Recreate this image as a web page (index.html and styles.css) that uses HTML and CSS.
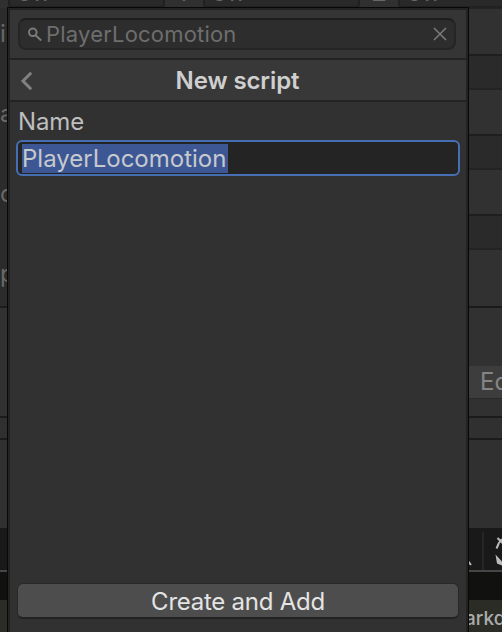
FILE: index.html
```html
<!DOCTYPE html>
<html lang="en">
<head>
<meta charset="utf-8">
<title>New script</title>
<link rel="stylesheet" href="styles.css">
</head>
<body>
<div class="editor">
  <div class="fields">
    <div class="field"><span>Off</span></div><div class="axis"><span>Y</span></div>
    <div class="field"><span>Off</span></div><div class="axis"><span>Z</span></div>
    <div class="field"><span>Off</span></div>
  </div>
  <div class="inspector">
    <div class="labels">
      <span>i</span><span>a</span><span>c</span><span>p</span>
    </div>
    <div class="rows">
      <div class="row first"></div>
      <div class="head"></div><div class="row"></div>
      <div class="head"></div><div class="row"></div>
      <div class="head"></div><div class="row last"></div>
    </div>
  </div>
  <div class="material"><span class="edit">Edit</span></div>
  <div class="strip"></div>
  <div class="empty"></div>
  <div class="toolbar">
    <svg width="34" height="42" viewBox="468 528 34 42">
      <path d="M468 561l3 4" stroke="#b4b4b4" stroke-width="2"/>
      <path d="M483 532v38" stroke="#262626" stroke-width="2"/>
      <path d="M496.500 548.500l2.200-5M497.500 538l5 5M502 539l-3.500 4.500" stroke="#bcbcbc" stroke-width="2" fill="none"/>
      <path d="M495.500 554.500l6.500 7v4l-5-2z" fill="#bcbcbc"/>
    </svg>
  </div>
  <div class="gap"></div>
  <div class="assets"><span>arkdown</span></div>
</div>

<div class="popup">
  <div class="search-bar">
    <div class="search">
      <svg class="lens" width="16" height="16" viewBox="0 0 16 16"><circle cx="5.8" cy="5.3" r="3.8"/><path d="M8.6 8.2l5.6 5.3"/></svg>
      <span class="query">PlayerLocomotion</span>
      <svg class="clear" width="14" height="14" viewBox="0 0 14 14"><path d="M1 1l12 12M13 1L1 13"/></svg>
    </div>
  </div>
  <div class="title">
    <svg class="back" width="14" height="20" viewBox="0 0 14 20"><path d="M11.2 1.8L3 10l8.2 8.2"/></svg>
    <h1>New script</h1>
  </div>
  <div class="body">
    <div class="label">Name</div>
    <div class="name"><span>PlayerLocomotion</span></div>
    <div class="create">Create and Add</div>
  </div>
</div>
</body>
</html>
```

FILE: styles.css
```css
* { box-sizing: border-box; }
body {
  margin: 0;
  width: 502px;
  height: 632px;
  overflow: hidden;
  position: relative;
  background: #303030;
  font-family: Inter, "Liberation Sans", sans-serif;
  font-size: 24px;
  font-weight: 400;
  color: #bebebe;
}
svg { display: block; fill: none; flex: none; }

.editor { display: flex; flex-direction: column; height: 632px; overflow: hidden; color: #686868; }
.fields { display: flex; height: 8px; overflow: hidden; background: #303030; padding-left: 8px; }
.field {
  width: 157px;
  flex: none;
  height: 8px;
  background: #292929;
  border: 2px solid #212121;
  border-top: 0;
  border-radius: 0 0 4px 4px;
  padding-left: 5px;
}
.field span, .axis span { display: block; height: 30px; line-height: 30px; margin-top: -22px; }
.axis { width: 38px; flex: none; text-align: center; }
.inspector { display: flex; justify-content: space-between; height: 298px; }
.labels { width: 8px; height: 298px; background: #2b2b2b; overflow: hidden; display: flex; flex-direction: column; padding-top: 10px; }
.labels span { height: 80px; line-height: 32px; flex: none; }
.rows { width: 34px; }
.row { height: 44px; background: #313131; }
.first { height: 46px; border-top: 1px solid #242424; }
.last { height: 56px; }
.head { height: 36px; background: #2a2a2a; border-top: 2px solid #1e1e1e; border-bottom: 2px solid #242424; }
.material { height: 110px; border-top: 2px solid #1b1b1b; background: #313131; padding: 58px 0 0 468px; }
.edit { display: block; height: 33px; background: #3d3d3d; border-bottom: 1px solid #292929; padding-left: 12px; line-height: 32px; color: #858585; }
.strip { height: 24px; border-top: 2px solid #1b1b1b; border-bottom: 2px solid #1b1b1b; background: #303030; }
.empty { height: 88px; background: #303030; }
.toolbar { height: 42px; background: #191919; padding-left: 468px; }
.gap { height: 30px; border-top: 2px solid #464646; background: #11110f; }
.assets { height: 32px; background: #2b2c26; padding-left: 465px; overflow: hidden; font-size: 19px; font-weight: 500; line-height: 38px; color: #acacac; }

.popup {
  position: absolute;
  left: 7px;
  top: 7px;
  width: 462px;
  height: 625px;
  border: 1px solid #080808;
  border-bottom: 0;
  padding: 2px 2px 0;
  background: #232323;
  display: flex;
  flex-direction: column;
}
.search-bar { height: 50px; background: #353535; border-bottom: 2px solid #222; padding: 8px 10px 0 8px; }
.search {
  height: 32px;
  display: flex;
  align-items: center;
  border: 2px solid #252525;
  border-top-color: #1e1e1e;
  border-radius: 8px;
  background: #2d2d2d;
  padding: 0 7px 0 7px;
}
.lens { stroke: #7b7b7b; stroke-width: 2; margin-top: 1px; }
.query { color: #6e6e6e; margin-left: 3px; flex: 1; font-size: 22px; line-height: 28px; letter-spacing: .2px; }
.clear { stroke: #7b7b7b; stroke-width: 1.5; }
.title { height: 42px; display: flex; align-items: center; background: #383838; border-bottom: 2px solid #232323; padding: 0 7px 0 10px; }
.back { stroke: #818181; stroke-width: 3; margin-top: 2px; }
h1 { flex: 1; margin: 1px 18px 0 0; text-align: center; font-size: 24px; line-height: 30px; font-weight: 600; letter-spacing: -.1px; color: #cfcfcf; }
.body { flex: 1; display: flex; flex-direction: column; background: #313131; padding: 0 7px 13px 6px; }
.label { height: 38px; line-height: 39px; padding-left: 2px; letter-spacing: -.1px; }
.name { height: 36px; border: 2px solid #466fb3; border-radius: 6px; background: #242424; padding: 2px 4px; margin-right: -1px; }
.name span { display: block; width: 206px; height: 29px; line-height: 30px; background: #3d5794; color: #c6c9ce; white-space: nowrap; }
.create { margin: auto 0 0 1px; height: 36px; border: 1px solid #282828; border-bottom: 2px solid #222; border-radius: 6px; background: #4d4d4d; color: #e4e4e4; text-align: center; line-height: 35px; letter-spacing: -.25px; }
```
